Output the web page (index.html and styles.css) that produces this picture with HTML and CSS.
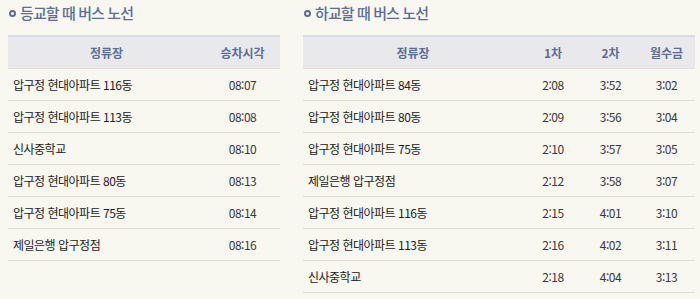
FILE: index.html
```html
<!DOCTYPE html>
<html lang="ko">
<head>
<meta charset="utf-8">
<link rel="stylesheet" href="styles.css">
</head>
<body>
<div class="page">
  <section class="route route-go">
    <h2 class="title"><span class="bullet"></span>등교할 때 버스 노선</h2>
    <table class="tbl">
      <colgroup><col class="c-stop-l"><col></colgroup>
      <thead><tr><th>정류장</th><th>승차시각</th></tr></thead>
      <tbody>
        <tr><td class="stop">압구정 현대아파트 116동</td><td>08:07</td></tr>
        <tr><td class="stop">압구정 현대아파트 113동</td><td>08:08</td></tr>
        <tr><td class="stop">신사중학교</td><td>08:10</td></tr>
        <tr><td class="stop">압구정 현대아파트 80동</td><td>08:13</td></tr>
        <tr><td class="stop">압구정 현대아파트 75동</td><td>08:14</td></tr>
        <tr><td class="stop">제일은행 압구정점</td><td>08:16</td></tr>
      </tbody>
    </table>
  </section>
  <section class="route route-back">
    <h2 class="title"><span class="bullet"></span>하교할 때 버스 노선</h2>
    <table class="tbl">
      <colgroup><col class="c-stop-r"><col class="c-1"><col class="c-2"><col></colgroup>
      <thead><tr><th>정류장</th><th>1차</th><th>2차</th><th>월수금</th></tr></thead>
      <tbody>
        <tr><td class="stop">압구정 현대아파트 84동</td><td>2:08</td><td>3:52</td><td>3:02</td></tr>
        <tr><td class="stop">압구정 현대아파트 80동</td><td>2:09</td><td>3:56</td><td>3:04</td></tr>
        <tr><td class="stop">압구정 현대아파트 75동</td><td>2:10</td><td>3:57</td><td>3:05</td></tr>
        <tr><td class="stop">제일은행 압구정점</td><td>2:12</td><td>3:58</td><td>3:07</td></tr>
        <tr><td class="stop">압구정 현대아파트 116동</td><td>2:15</td><td>4:01</td><td>3:10</td></tr>
        <tr><td class="stop">압구정 현대아파트 113동</td><td>2:16</td><td>4:02</td><td>3:11</td></tr>
        <tr><td class="stop">신사중학교</td><td>2:18</td><td>4:04</td><td>3:13</td></tr>
      </tbody>
    </table>
  </section>
</div>
</body>
</html>
```

FILE: styles.css
```css
html, body {
  margin: 0;
  padding: 0;
  background: #f8f7f0;
}
body {
  font-family: "Noto Sans CJK KR", "Noto Sans", sans-serif;
  color: #333;
}
.page {
  display: flex;
  gap: 23px;
  padding: 0 5px 0 8px;
  align-items: flex-start;
}
.route-go { width: 272px; }
.route-back { width: 392px; }
.title {
  margin: 0 0 9px;
  height: 26px;
  line-height: 26px;
  font-size: 15px;
  font-weight: 500;
  color: #5b6e98;
  letter-spacing: -0.9px;
  display: flex;
  align-items: center;
}
.bullet {
  width: 7px;
  height: 7px;
  border: 2px solid #5b6e98;
  border-radius: 50%;
  box-sizing: border-box;
  margin: 0 4px 0 1px;
}
.tbl {
  width: 100%;
  border-collapse: collapse;
  table-layout: fixed;
}
.c-stop-l { width: 197px; }
.c-stop-r { width: 220px; }
.c-1 { width: 60px; }
.c-2 { width: 55px; }
.tbl th {
  height: 31px;
  padding: 0;
  background: #e9e9eb;
  border-top: 2px solid #d6dce6;
  border-bottom: 1px solid #ecdcd8;
  color: #5b6e98;
  font-size: 12px;
  font-weight: bold;
  text-align: center;
}
.tbl td {
  height: 31px;
  padding: 0;
  border-bottom: 1px solid #e0dcd5;
  font-size: 12px;
  text-align: center;
  color: #3a3a3a;
  letter-spacing: -0.5px;
}
.tbl td.stop {
  text-align: left;
  padding-left: 5px;
  color: #222;
}
```
